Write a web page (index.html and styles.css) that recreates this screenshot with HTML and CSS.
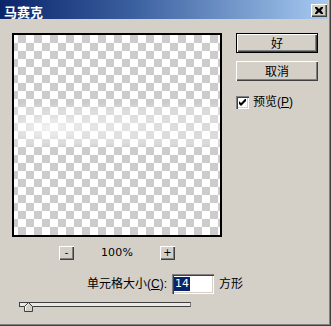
FILE: index.html
```html
<!DOCTYPE html>
<html lang="zh-CN">
<head>
<meta charset="utf-8">
<title>马赛克</title>
<link rel="stylesheet" href="styles.css">
</head>
<body>
<div class="window">
  <div class="titlebar">
    <span class="title">马赛克</span>
    <span class="close">
      <svg width="8" height="7" viewBox="0 0 8 7"><path d="M0 0h2l2 2 2-2h2v1L6 3.5 8 6v1H6L4 5 2 7H0V6l2-2.5L0 1z" fill="#000"/></svg>
    </span>
  </div>
  <div class="main">
    <div class="left">
      <div class="preview"><div class="mosaic"></div></div>
      <div class="zoombar">
        <span class="tbtn">-</span>
        <span class="pct">100%</span>
        <span class="tbtn">+</span>
      </div>
    </div>
    <div class="right">
      <div class="btn default"><span class="btn-in">好</span></div>
      <div class="btn">取消</div>
      <div class="check">
        <span class="box"><svg width="7" height="7" viewBox="0 0 7 7"><path d="M0 2l2 2 5-5v3L2 7 0 5z" fill="#000"/></svg></span>
        <span class="label">预览(<u>P</u>)</span>
      </div>
    </div>
  </div>
  <div class="sizerow">
    <span class="label">单元格大小(<u>C</u>):</span>
    <span class="input"><span class="sel">14</span></span>
    <span class="label">方形</span>
  </div>
  <div class="slider">
    <div class="track"></div>
    <svg class="thumb" width="9" height="10" viewBox="0 0 9 10">
      <path d="M0.5 9.5V4.5L4.5 0.5L8.5 4.5V9.5Z" fill="#d4d0c8" stroke="#404040"/>
      <path d="M1.5 8.5V4.9L4.5 1.9" fill="none" stroke="#fff"/>
    </svg>
  </div>
</div>
</body>
</html>
```

FILE: styles.css
```css
html, body {
  margin: 0;
  padding: 0;
  background: #d4d0c8;
}
body {
  font-family: "Liberation Sans", "Noto Sans CJK SC", sans-serif;
  font-size: 12px;
  color: #000;
}
.window {
  width: 331px;
  height: 326px;
  box-sizing: border-box;
  background: #d4d0c8;
  box-shadow: inset -1px -1px #404040, inset -2px -2px #808080;
  overflow: hidden;
}
.titlebar {
  height: 19px;
  margin-right: 3px;
  background: linear-gradient(to right, #0a246a 0%, #3a5f9f 40%, #a6caf0 100%);
  display: flex;
  align-items: flex-start;
  padding-left: 4px;
}
.title {
  font-family: "Noto Sans CJK SC", sans-serif;
  font-weight: bold;
  font-size: 13px;
  line-height: 13px;
  color: #fff;
  margin-top: 5px;
}
.close {
  margin-left: auto;
  margin-right: 1px;
  margin-top: 4px;
  width: 16px;
  height: 13px;
  box-sizing: border-box;
  background: #d4d0c8;
  box-shadow: inset 1px 1px #fff, inset -1px -1px #404040, inset -2px -2px #808080;
  display: flex;
  align-items: center;
  justify-content: center;
}
.close svg { display: block; }
.main {
  display: flex;
  padding-top: 14px;
}
.left {
  margin-left: 12px;
  width: 210px;
}
.preview {
  position: relative;
  width: 210px;
  height: 204px;
  box-sizing: border-box;
  border: 2px solid #000;
  background-color: #fff;
  background-image: repeating-conic-gradient(#cccccc 0 25%, #ffffff 0 50%);
  background-size: 16px 16px;
  background-position: -4px 0;
}
.mosaic {
  position: absolute;
  inset: 0;
  background:
    radial-gradient(ellipse 40px 14px at 35px 93px, rgba(255,255,255,0.55), rgba(255,255,255,0) 100%),
    radial-gradient(ellipse 100px 20px at 80px 92px, rgba(255,255,255,0.3), rgba(255,255,255,0) 100%),
    linear-gradient(to bottom, rgba(255,255,255,0) 68px, rgba(255,255,255,0.3) 74px, rgba(255,255,255,0.3) 108px, rgba(255,255,255,0) 114px);
}
.zoombar {
  margin-top: 9px;
  display: flex;
  justify-content: center;
  align-items: center;
  height: 14px;
}
.tbtn {
  width: 15px;
  height: 14px;
  box-sizing: border-box;
  background: #d4d0c8;
  box-shadow: inset 1px 1px #fff, inset -1px -1px #404040, inset -2px -2px #808080;
  font-family: "DejaVu Sans", sans-serif;
  font-size: 10px;
  line-height: 13px;
  text-align: center;
}
.pct {
  width: 86px;
  text-align: center;
  font-family: "DejaVu Sans", sans-serif;
  font-size: 11px;
  line-height: 14px;
  letter-spacing: 0.2px;
}
.right {
  margin-left: 14px;
  width: 82px;
  display: flex;
  flex-direction: column;
}
.btn {
  height: 20px;
  box-sizing: border-box;
  background: #d4d0c8;
  box-shadow: inset 1px 1px #fff, inset -1px -1px #404040, inset -2px -2px #808080;
  font-family: "Noto Sans CJK SC", sans-serif;
  font-size: 12px;
  line-height: 19px;
  text-align: center;
  margin-bottom: 8px;
}
.btn.default {
  border: 1px solid #000;
  line-height: 17px;
}
.check {
  margin-top: 6px;
  display: flex;
  align-items: center;
  height: 14px;
}
.box {
  width: 13px;
  height: 13px;
  box-sizing: border-box;
  background: #fff;
  box-shadow: inset 1px 1px #808080, inset 2px 2px #404040, inset -1px -1px #fff, inset -2px -2px #d4d0c8;
  display: flex;
  align-items: center;
  justify-content: center;
}
.box svg { display: block; }
.check .label {
  margin-left: 4px;
}
.label {
  font-size: 12px;
  line-height: 14px;
  white-space: nowrap;
}
.label u {
  text-underline-offset: 1px;
}
.sizerow {
  margin-top: 14px;
  display: flex;
  align-items: center;
  height: 20px;
  padding-left: 87px;
}
.input {
  margin-left: 5px;
  margin-right: 5px;
  width: 42px;
  height: 20px;
  box-sizing: border-box;
  background: #fff;
  box-shadow: inset 1px 1px #808080, inset 2px 2px #404040, inset -1px -1px #fff, inset -2px -2px #d4d0c8;
  display: flex;
  align-items: center;
  padding-left: 2px;
}
.sel {
  background: #0a246a;
  color: #fff;
  font-family: "DejaVu Sans", sans-serif;
  font-size: 11px;
  line-height: 14px;
  padding: 0 1px;
}
.slider {
  position: relative;
  margin-top: 8px;
  margin-left: 19px;
  width: 172px;
  height: 10px;
}
.track {
  margin-top: 5px;
  height: 5px;
  box-sizing: border-box;
  border: 1px solid #404040;
  border-right-color: #808080;
  background: #ebe9e4;
}
.thumb {
  position: absolute;
  left: 5px;
  top: 0;
  display: block;
}
```
